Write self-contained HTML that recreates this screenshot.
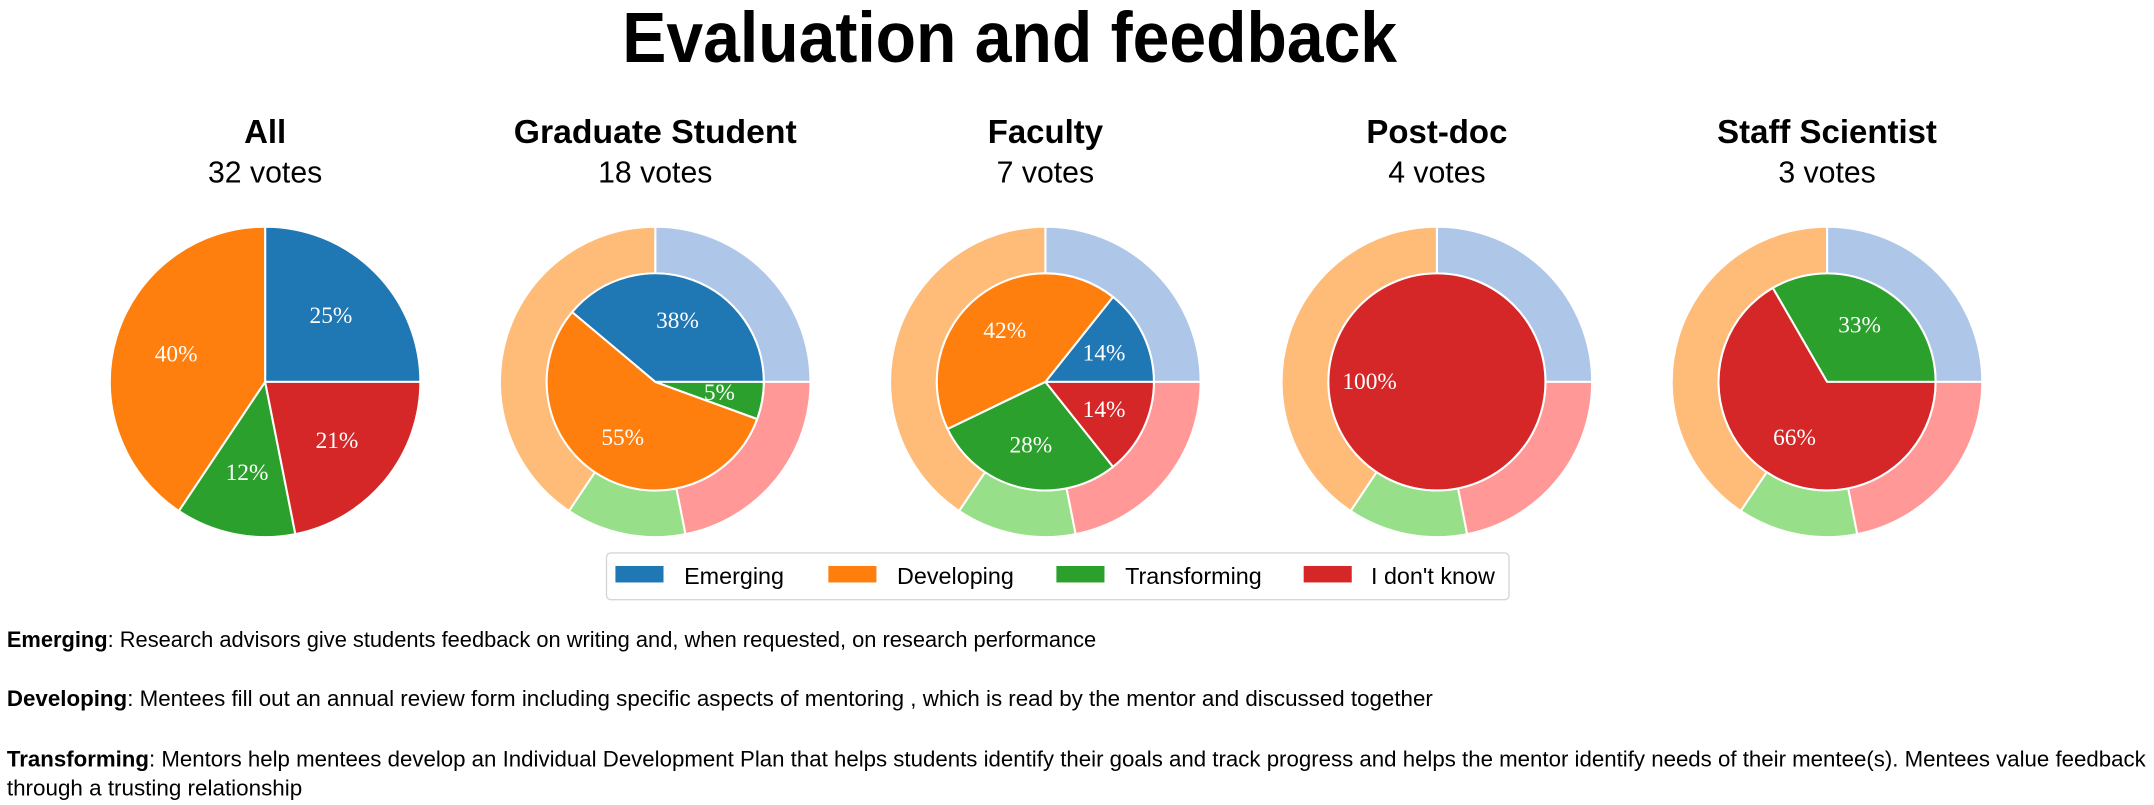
<!DOCTYPE html>
<html><head><meta charset="utf-8"><style>
html,body{margin:0;padding:0;background:#fff;}
svg{display:block;}
text{font-family:"Liberation Sans",sans-serif;}
.t{font-weight:bold;font-size:24px;text-anchor:middle;}
.v{font-size:22px;text-anchor:middle;}
.p{font-family:"Liberation Serif",serif;font-size:17px;fill:#fff;text-anchor:middle;dominant-baseline:central;}
.l{font-size:17px;}
.d{font-size:16px;}
path,circle{stroke:#fff;stroke-width:1.5;stroke-linejoin:round;}
</style></head><body>
<svg width="2154" height="805" viewBox="0 0 1568 586" preserveAspectRatio="none" xmlns="http://www.w3.org/2000/svg">
<defs>
<g id="ring">
<path fill="#aec7e8" d="M113,0 A113,113 0 0 0 0,-113 L0,-79 A79,79 0 0 1 79,0 Z"/>
<path fill="#ffbb78" d="M0,-113 A113,113 0 0 0 -62.8,94 L-43.9,65.7 A79,79 0 0 1 0,-79 Z"/>
<path fill="#98df8a" d="M-62.8,94 A113,113 0 0 0 22,110.8 L15.4,77.5 A79,79 0 0 1 -43.9,65.7 Z"/>
<path fill="#ff9896" d="M22,110.8 A113,113 0 0 0 113,0 L79,0 A79,79 0 0 1 15.4,77.5 Z"/>
</g>
</defs>

<text x="735" y="45" font-size="52" font-weight="bold" text-anchor="middle" textLength="564" lengthAdjust="spacingAndGlyphs">Evaluation and feedback</text>

<!-- All -->
<text class="t" x="193" y="104">All</text>
<text class="v" x="193" y="133">32 votes</text>
<g transform="translate(193,278)">
<path fill="#1f77b4" d="M0,0 L113,0 A113,113 0 0 0 0,-113 Z"/>
<path fill="#ff7f0e" d="M0,0 L0,-113 A113,113 0 0 0 -62.8,94 Z"/>
<path fill="#2ca02c" d="M0,0 L-62.8,94 A113,113 0 0 0 22,110.8 Z"/>
<path fill="#d62728" d="M0,0 L22,110.8 A113,113 0 0 0 113,0 Z"/>
<text class="p" x="47.9" y="-47.9">25%</text>
<text class="p" x="-64.8" y="-19.8">40%</text>
<text class="p" x="-13.2" y="66.5">12%</text>
<text class="p" x="52.3" y="43">21%</text>
</g>

<!-- Graduate -->
<text class="t" x="477" y="104" textLength="206" lengthAdjust="spacingAndGlyphs">Graduate Student</text>
<text class="v" x="477" y="133">18 votes</text>
<g transform="translate(477,278)">
<use href="#ring"/>
<path fill="#1f77b4" d="M0,0 L79,0 A79,79 0 0 0 -60.5,-50.8 Z"/>
<path fill="#ff7f0e" d="M0,0 L-60.5,-50.8 A79,79 0 1 0 74.2,27 Z"/>
<path fill="#2ca02c" d="M0,0 L74.2,27 A79,79 0 0 0 79,0 Z"/>
<text class="p" x="16.2" y="-44.5">38%</text>
<text class="p" x="-23.7" y="41">55%</text>
<text class="p" x="46.7" y="8.2">5%</text>
</g>

<!-- Faculty -->
<text class="t" x="761" y="104">Faculty</text>
<text class="v" x="761" y="133">7 votes</text>
<g transform="translate(761,278)">
<use href="#ring"/>
<path fill="#1f77b4" d="M0,0 L79,0 A79,79 0 0 0 49.2,-61.8 Z"/>
<path fill="#ff7f0e" d="M0,0 L49.2,-61.8 A79,79 0 0 0 -71.2,34.3 Z"/>
<path fill="#2ca02c" d="M0,0 L-71.2,34.3 A79,79 0 0 0 49.2,61.8 Z"/>
<path fill="#d62728" d="M0,0 L49.2,61.8 A79,79 0 0 0 79,0 Z"/>
<text class="p" x="42.7" y="-20.6">14%</text>
<text class="p" x="-29.6" y="-37.1">42%</text>
<text class="p" x="-10.6" y="46.2">28%</text>
<text class="p" x="42.7" y="20.6">14%</text>
</g>

<!-- Post-doc -->
<text class="t" x="1046" y="104">Post-doc</text>
<text class="v" x="1046" y="133">4 votes</text>
<g transform="translate(1046,278)">
<use href="#ring"/>
<circle r="79" fill="#d62728"/>
<text class="p" x="-49" y="0">100%</text>
</g>

<!-- Staff -->
<text class="t" x="1330" y="104">Staff Scientist</text>
<text class="v" x="1330" y="133">3 votes</text>
<g transform="translate(1330,278)">
<use href="#ring"/>
<path fill="#2ca02c" d="M0,0 L79,0 A79,79 0 0 0 -39.5,-68.4 Z"/>
<path fill="#d62728" d="M0,0 L-39.5,-68.4 A79,79 0 1 0 79,0 Z"/>
<text class="p" x="23.7" y="-41">33%</text>
<text class="p" x="-23.7" y="41">66%</text>
</g>

<!-- Legend -->
<rect x="441.5" y="402.5" width="657" height="34" rx="3" fill="#fff" stroke="#d6d6d6" stroke-width="1"/>
<rect x="448" y="412" width="35" height="12" fill="#1f77b4"/>
<text class="l" x="498" y="425">Emerging</text>
<rect x="603" y="412" width="35" height="12" fill="#ff7f0e"/>
<text class="l" x="653" y="425">Developing</text>
<rect x="769" y="412" width="35" height="12" fill="#2ca02c"/>
<text class="l" x="819" y="425">Transforming</text>
<rect x="949" y="412" width="35" height="12" fill="#d62728"/>
<text class="l" x="998" y="425">I don't know</text>

<!-- Descriptions -->
<text class="d" x="5" y="471" textLength="793" lengthAdjust="spacingAndGlyphs"><tspan font-weight="bold">Emerging</tspan>: Research advisors give students feedback on writing and, when requested, on research performance</text>
<text class="d" x="5" y="514" textLength="1038" lengthAdjust="spacingAndGlyphs"><tspan font-weight="bold">Developing</tspan>: Mentees fill out an annual review form including specific aspects of mentoring , which is read by the mentor and discussed together</text>
<text class="d" x="5" y="558" textLength="1557" lengthAdjust="spacingAndGlyphs"><tspan font-weight="bold">Transforming</tspan>: Mentors help mentees develop an Individual Development Plan that helps students identify their goals and track progress and helps the mentor identify needs of their mentee(s). Mentees value feedback</text>
<text class="d" x="5" y="579" textLength="215" lengthAdjust="spacingAndGlyphs">through a trusting relationship</text>
</svg>
</body></html>
